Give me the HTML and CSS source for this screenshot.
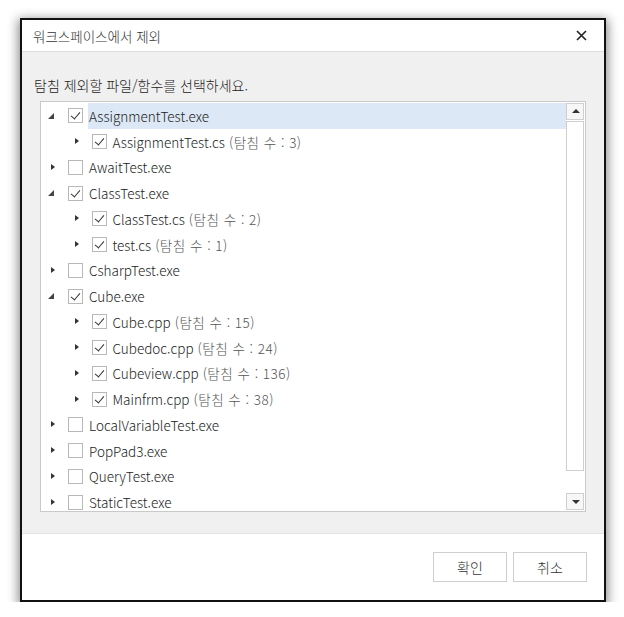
FILE: index.html
```html
<!DOCTYPE html>
<html lang="ko">
<head>
<meta charset="utf-8">
<title>워크스페이스에서 제외</title>
<link rel="stylesheet" href="styles.css">
</head>
<body>
<div class="dialog">
  <div class="header">
    <span class="title">워크스페이스에서 제외</span>
    <svg class="close" width="11" height="11" viewBox="0 0 11 11"><path d="M1 1L10 10M10 1L1 10" stroke="#222" stroke-width="1.6" fill="none"/></svg>
  </div>
  <div class="body">
    <div class="subtitle">탐침 제외할 파일/함수를 선택하세요.</div>
    <div class="tree">
      <div class="list">
        <div class="row l0"><span class="tog open"></span><span class="cb on"></span><span class="label sel">AssignmentTest.exe</span></div>
        <div class="row l1"><span class="tog"></span><span class="cb on"></span><span class="label">AssignmentTest.cs <span class="cnt">(탐침 수 : 3)</span></span></div>
        <div class="row l0"><span class="tog"></span><span class="cb"></span><span class="label">AwaitTest.exe</span></div>
        <div class="row l0"><span class="tog open"></span><span class="cb on"></span><span class="label">ClassTest.exe</span></div>
        <div class="row l1"><span class="tog"></span><span class="cb on"></span><span class="label">ClassTest.cs <span class="cnt">(탐침 수 : 2)</span></span></div>
        <div class="row l1"><span class="tog"></span><span class="cb on"></span><span class="label">test.cs <span class="cnt">(탐침 수 : 1)</span></span></div>
        <div class="row l0"><span class="tog"></span><span class="cb"></span><span class="label">CsharpTest.exe</span></div>
        <div class="row l0"><span class="tog open"></span><span class="cb on"></span><span class="label">Cube.exe</span></div>
        <div class="row l1"><span class="tog"></span><span class="cb on"></span><span class="label">Cube.cpp <span class="cnt">(탐침 수 : 15)</span></span></div>
        <div class="row l1"><span class="tog"></span><span class="cb on"></span><span class="label">Cubedoc.cpp <span class="cnt">(탐침 수 : 24)</span></span></div>
        <div class="row l1"><span class="tog"></span><span class="cb on"></span><span class="label">Cubeview.cpp <span class="cnt">(탐침 수 : 136)</span></span></div>
        <div class="row l1"><span class="tog"></span><span class="cb on"></span><span class="label">Mainfrm.cpp <span class="cnt">(탐침 수 : 38)</span></span></div>
        <div class="row l0"><span class="tog"></span><span class="cb"></span><span class="label">LocalVariableTest.exe</span></div>
        <div class="row l0"><span class="tog"></span><span class="cb"></span><span class="label">PopPad3.exe</span></div>
        <div class="row l0"><span class="tog"></span><span class="cb"></span><span class="label">QueryTest.exe</span></div>
        <div class="row l0"><span class="tog"></span><span class="cb"></span><span class="label">StaticTest.exe</span></div>
      </div>
      <div class="scroll">
        <div class="sbtn up"></div>
        <div class="track"><div class="thumb"></div></div>
        <div class="sbtn down"></div>
      </div>
    </div>
  </div>
  <div class="footer">
    <button class="btn">확인</button>
    <button class="btn">취소</button>
  </div>
</div>
</body>
</html>
```

FILE: styles.css
```css
* { box-sizing: border-box; }
html, body { margin: 0; padding: 0; background: #fff; }
body {
  font-family: "Noto Sans CJK KR", "Noto Sans", sans-serif;
  font-weight: 300;
  color: #222;
  padding: 18px 0 0 20px;
}
.dialog {
  width: 586px;
  height: 584px;
  border: 2px solid #111;
  background: #fff;
  box-shadow: 0 3px 10px 2px rgba(0,0,0,0.45);
  display: flex;
  flex-direction: column;
}
.header {
  height: 32px;
  flex: none;
  display: flex;
  align-items: center;
  justify-content: space-between;
  padding: 0 17px 0 11px;
  border-bottom: 1px solid #dcdcdc;
  font-size: 13.5px;
  color: #333;
}
.body {
  flex: 1;
  background: #f0f0f0;
  padding: 23px 18px 21px 12px;
  display: flex;
  flex-direction: column;
}
.subtitle {
  font-size: 14px;
  line-height: 20px;
  height: 20px;
  color: #222;
  margin-bottom: 6px;
}
.tree {
  margin-left: 6px;
  height: 411px;
  border: 1px solid #c9c9c9;
  background: #fff;
  display: flex;
}
.list {
  flex: 1;
  padding-top: 1px;
  overflow: hidden;
}
.row {
  height: 25.75px;
  display: flex;
  align-items: center;
  font-size: 13.5px;
  white-space: nowrap;
}
.row.l0 { padding-left: 5px; }
.row.l1 { padding-left: 28.5px; }
.tog {
  width: 12px;
  height: 12px;
  margin-right: 10px;
  flex: none;
  position: relative;
}
.tog::after {
  content: "";
  position: absolute;
  left: 5px;
  top: 2.5px;
  border-left: 4px solid #333;
  border-top: 3.5px solid transparent;
  border-bottom: 3.5px solid transparent;
}
.tog.open::after {
  left: 2px;
  top: 3px;
  border: none;
  width: 0;
  height: 0;
  border-right: 6px solid #444;
  border-top: 6px solid transparent;
}
.cb {
  width: 15px;
  height: 15px;
  flex: none;
  border: 1px solid #b8b8b8;
  background: #fff;
  margin-right: 5px;
  position: relative;
}
.cb.on::after {
  content: "";
  position: absolute;
  left: 4px;
  top: 1px;
  width: 4px;
  height: 8px;
  border-right: 1.3px solid #333;
  border-bottom: 1.3px solid #333;
  transform: rotate(40deg);
}
.label {
  flex: 1;
  height: 100%;
  display: flex;
  align-items: center;
  padding-left: 1px;
  color: #222;
}
.label.sel { background: #dce8f5; }
.cnt { color: #555; margin-left: 4px; letter-spacing: 0.5px; }
.scroll {
  width: 19px;
  flex: none;
  padding: 1px 1px 1px 0;
  display: flex;
  flex-direction: column;
  gap: 1px;
}
.sbtn {
  height: 17px;
  border: 1px solid #cfcfcf;
  background: #f7f7f7;
  position: relative;
  flex: none;
}
.sbtn::after {
  content: "";
  position: absolute;
  left: 4.5px;
  border-left: 4px solid transparent;
  border-right: 4px solid transparent;
}
.sbtn.up::after { top: 5px; border-bottom: 4px solid #333; }
.sbtn.down::after { top: 6px; border-top: 4px solid #333; }
.track {
  flex: 1;
  display: flex;
  flex-direction: column;
}
.thumb {
  height: 350px;
  border: 1px solid #cfcfcf;
  background: #fff;
}
.footer {
  height: 67px;
  flex: none;
  border-top: 1px solid #e2e2e2;
  display: flex;
  justify-content: flex-end;
  align-items: flex-start;
  gap: 6px;
  padding: 18px 17px 0 0;
}
.btn {
  width: 74px;
  height: 30px;
  border: 1px solid #cfcfcf;
  background: #fff;
  font-family: "Noto Sans CJK KR", "Noto Sans", sans-serif;
  font-weight: 300;
  font-size: 14px;
  color: #333;
  padding: 0;
}
```
